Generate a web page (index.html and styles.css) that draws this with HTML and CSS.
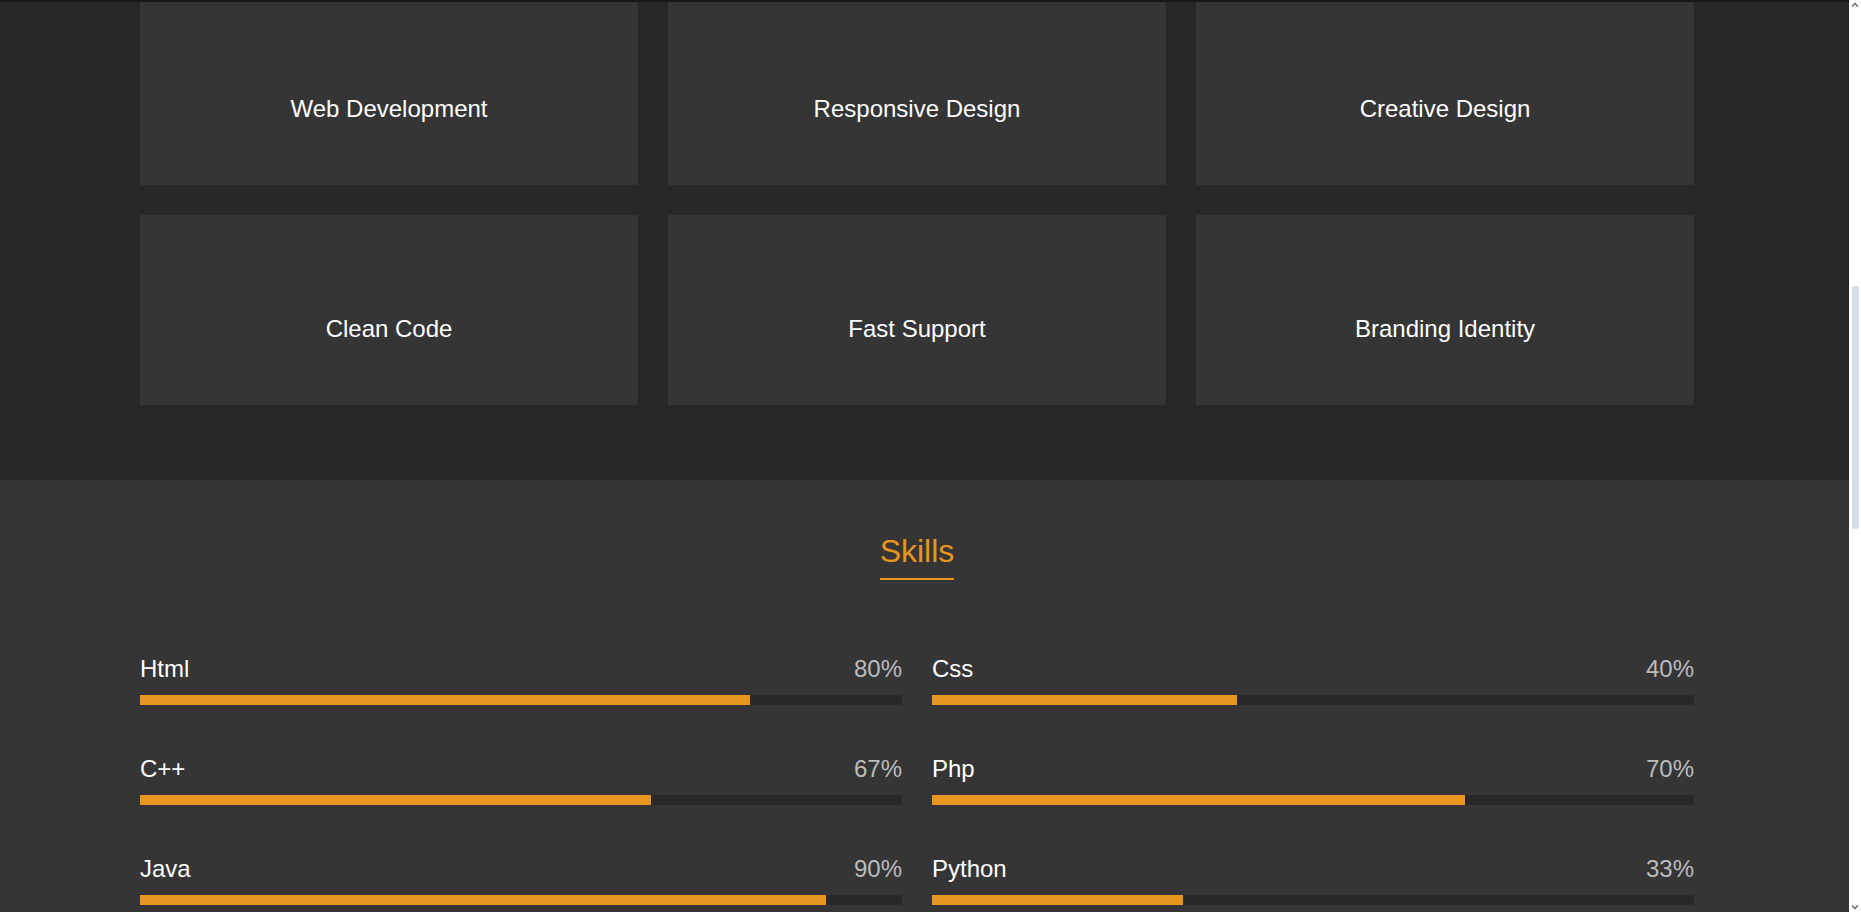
FILE: index.html
```html
<!DOCTYPE html>
<html lang="en">
<head>
<meta charset="utf-8">
<title>Services &amp; Skills</title>
<link rel="stylesheet" href="styles.css">
</head>
<body>
<div class="window">
  <div class="viewport">
    <div class="topline"></div>
    <div class="page">
      <section class="services">
        <div class="container card-grid">
          <div class="card"><h3>Web Development</h3></div>
          <div class="card"><h3>Responsive Design</h3></div>
          <div class="card"><h3>Creative Design</h3></div>
          <div class="card"><h3>Clean Code</h3></div>
          <div class="card"><h3>Fast Support</h3></div>
          <div class="card"><h3>Branding Identity</h3></div>
        </div>
      </section>
      <section class="skills">
        <div class="container">
          <div class="title-wrap"><h2 class="title">Skills</h2></div>
          <div class="skill-grid">
            <div class="skill">
              <div class="skill-head"><span class="name">Html</span><span class="pct">80%</span></div>
              <div class="track"><div class="fill" style="width:80%"></div></div>
            </div>
            <div class="skill">
              <div class="skill-head"><span class="name">Css</span><span class="pct">40%</span></div>
              <div class="track"><div class="fill" style="width:40%"></div></div>
            </div>
            <div class="skill">
              <div class="skill-head"><span class="name">C++</span><span class="pct">67%</span></div>
              <div class="track"><div class="fill" style="width:67%"></div></div>
            </div>
            <div class="skill">
              <div class="skill-head"><span class="name">Php</span><span class="pct">70%</span></div>
              <div class="track"><div class="fill" style="width:70%"></div></div>
            </div>
            <div class="skill">
              <div class="skill-head"><span class="name">Java</span><span class="pct">90%</span></div>
              <div class="track"><div class="fill" style="width:90%"></div></div>
            </div>
            <div class="skill">
              <div class="skill-head"><span class="name">Python</span><span class="pct">33%</span></div>
              <div class="track"><div class="fill" style="width:33%"></div></div>
            </div>
          </div>
        </div>
      </section>
    </div>
  </div>
  <div class="scrollbar">
    <svg class="arrow" width="12" height="10" viewBox="0 0 12 10"><path d="M3 6.5 L6 3.5 L9 6.5" fill="none" stroke="#606060" stroke-width="1.4"/></svg>
    <div class="sb-track"><div class="thumb"></div></div>
    <svg class="arrow" width="12" height="10" viewBox="0 0 12 10"><path d="M3 3.5 L6 6.5 L9 3.5" fill="none" stroke="#606060" stroke-width="1.4"/></svg>
  </div>
</div>
</body>
</html>
```
FILE: styles.css
```css
html, body {
  margin: 0;
  padding: 0;
  height: 100%;
  overflow: hidden;
}
body {
  font-family: "Liberation Sans", Arial, sans-serif;
  background: #282828;
  color: #fff;
}
.window {
  display: flex;
  height: 912px;
}
.viewport {
  flex: 1;
  overflow: hidden;
  position: relative;
  background: #282828;
}
.topline {
  position: absolute;
  top: 0;
  left: 0;
  right: 0;
  height: 2px;
  background: #17171f;
  z-index: 2;
}
.page {
  margin-top: -5px;
}
.container {
  width: 1554px;
  margin-left: 140px;
}
.services {
  background: #282828;
  padding-bottom: 75px;
}
.card-grid {
  display: grid;
  grid-template-columns: repeat(3, 1fr);
  gap: 30px;
}
.card {
  background: #353535;
  height: 190px;
  box-sizing: border-box;
  padding-top: 37px;
  display: flex;
  align-items: center;
  justify-content: center;
}
.card h3 {
  margin: 0;
  font-size: 24px;
  font-weight: normal;
  color: #fff;
}
.skills {
  background: #353535;
  padding-top: 53px;
  padding-bottom: 80px;
}
.title-wrap {
  display: flex;
  justify-content: center;
}
.title {
  margin: 0;
  font-size: 32px;
  font-weight: normal;
  color: #e8951f;
  padding-bottom: 8px;
  border-bottom: 2px solid #e8951f;
}
.skill-grid {
  margin-top: 75px;
  display: grid;
  grid-template-columns: 1fr 1fr;
  column-gap: 30px;
  row-gap: 50px;
}
.skill-head {
  display: flex;
  justify-content: space-between;
  font-size: 24px;
  line-height: 28px;
  margin-bottom: 12px;
}
.name {
  color: #fff;
}
.pct {
  color: #bcbcbc;
}
.track {
  height: 10px;
  background: #282828;
}
.fill {
  height: 100%;
  background: #e8951f;
}
.scrollbar {
  width: 12px;
  background: #fff;
  display: flex;
  flex-direction: column;
  align-items: center;
}
.arrow {
  flex: none;
}
.sb-track {
  flex: 1;
  width: 100%;
  display: flex;
  justify-content: center;
  padding-top: 276px;
  box-sizing: border-box;
}
.thumb {
  width: 7px;
  height: 243px;
  background: #d5dce3;
  border-radius: 2px;
}
```
